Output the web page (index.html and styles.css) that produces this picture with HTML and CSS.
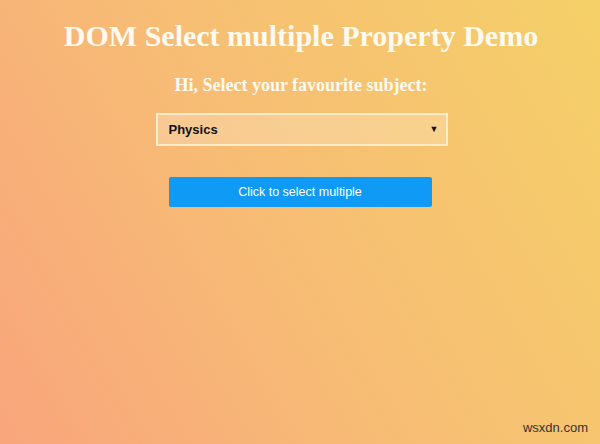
FILE: index.html
```html
<!DOCTYPE html>
<html>
<head>
<meta charset="utf-8">
<link rel="stylesheet" href="styles.css">
</head>
<body>
<div class="page">
  <h1 class="title">DOM Select multiple Property Demo</h1>
  <h3 class="subtitle">Hi, Select your favourite subject:</h3>
  <div class="select-wrap">
    <select class="subject">
      <option>Physics</option>
      <option>Chemistry</option>
      <option>Maths</option>
      <option>Biology</option>
    </select>
    <span class="arrow">&#9660;</span>
  </div>
  <button class="btn">Click to select multiple</button>
  <div class="watermark">wsxdn.com</div>
</div>
</body>
</html>
```
FILE: styles.css
```css
html, body {
  margin: 0;
  padding: 0;
  width: 600px;
  height: 444px;
  overflow: hidden;
}
body {
  background: linear-gradient(60deg, #f9a57c 0%, #f7bc75 45%, #f5d068 100%);
  font-family: "Liberation Serif", "Times New Roman", serif;
}
.page {
  position: relative;
  height: 444px;
  display: flex;
  flex-direction: column;
  align-items: center;
}
.title {
  margin: 19px 0 0 2px;
  font-size: 30px;
  line-height: 34px;
  font-weight: bold;
  color: #fffaf0;
}
.subtitle {
  margin: 22px 0 0 2px;
  font-size: 18px;
  line-height: 20px;
  font-weight: bold;
  color: #fffaf0;
}
.select-wrap {
  position: relative;
  margin: 18px 0 0 3px;
  width: 292px;
  height: 33px;
}
.subject {
  -webkit-appearance: none;
  appearance: none;
  width: 292px;
  height: 33px;
  box-sizing: border-box;
  border: 2px solid #fdeccb;
  background: rgba(255, 255, 255, 0.22);
  font-family: "Liberation Sans", Arial, sans-serif;
  font-size: 13px;
  font-weight: bold;
  color: #111;
  padding: 0 0 0 11px;
  border-radius: 0;
  outline: none;
}
.arrow {
  position: absolute;
  right: 9px;
  top: 11px;
  font-size: 9px;
  line-height: 10px;
  color: #111;
  pointer-events: none;
}
.btn {
  margin-top: 31px;
  width: 263px;
  height: 30px;
  border: none;
  border-radius: 2px;
  background: #0f9af6;
  color: #fff;
  font-family: "Liberation Sans", Arial, sans-serif;
  font-size: 12.5px;
}
.watermark {
  position: absolute;
  right: 12px;
  bottom: 9px;
  font-family: "Liberation Sans", Arial, sans-serif;
  font-size: 13px;
  color: #333;
}
```
